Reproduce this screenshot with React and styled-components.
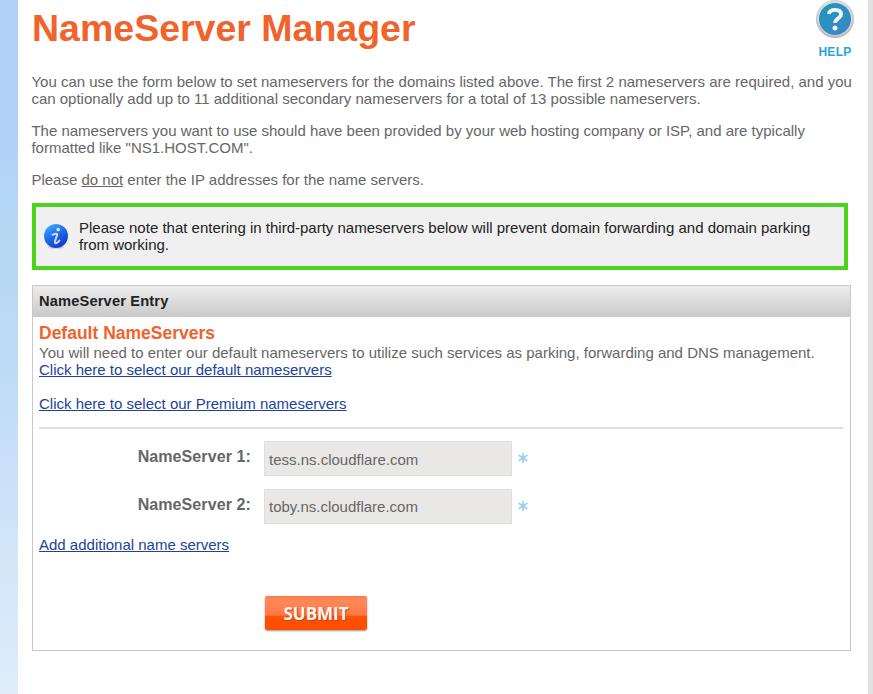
import React from "react";
import styled, { createGlobalStyle } from "styled-components";

const GlobalStyle = createGlobalStyle`
  * { box-sizing: border-box; }
  body { margin: 0; overflow: hidden; background: #fff; }
`;

const Page = styled.div`
  display: flex;
  width: 873px;
  height: 694px;
  overflow: hidden;
  background: linear-gradient(#b1d1f6 0, #b1d1f6 130px, #b2d6f8 190px, #b6d8f3 260px, #bedbf6 370px, #cbe1f9 480px, #d3e7f7 570px, #d8e8fc 610px, #dcebfa 660px, #e0ecf7 694px);
  font: 15px/17px "Liberation Sans", Arial, sans-serif;
  color: #666;
`;

const Content = styled.main`
  width: 850px;
  margin-left: 18px;
  padding-left: 14px;
  background: #fff;
`;

const RightEdge = styled.div`
  width: 5px;
  background: #e0e0e0;
`;

const Header = styled.header`
  display: flex;
  justify-content: space-between;
  height: 73px;
`;

const Title = styled.h1`
  margin: 5px 0 0;
  font-size: 37.5px;
  line-height: 46px;
  color: #f0632b;
  white-space: nowrap;
`;

const Help = styled.a`
  display: flex;
  flex-direction: column;
  align-items: center;
  width: 40px;
  margin-right: 13px;
  color: #2ba3dc;
  font-size: 12px;
  font-weight: bold;
  line-height: 14px;
  letter-spacing: 0.3px;
  svg { display: block; margin-bottom: 5px; }
`;

const Text = styled.p`
  margin: 0 0 ${(p) => p.$gap ?? 15}px ${(p) => p.$indent ?? 0}px;
  white-space: nowrap;
`;

const Notice = styled.aside`
  display: flex;
  width: 816px;
  height: 67px;
  border: 4px solid #4bd41b;
  background: #f0f0f0;
  color: #222;
  padding: 12px 0 0 7px;
  svg { margin: 4px 10px 0 0; flex: none; }
`;

const Panel = styled.section`
  width: 819px;
  height: 366px;
  margin-top: 15px;
  border: 1px solid #c9c9c9;
`;

const PanelTitle = styled.h2`
  margin: 0;
  height: 31px;
  padding-left: 6px;
  background: linear-gradient(#ebebeb 0, #e6e6e6 20%, #c9c9c9 100%);
  color: #222;
  font-size: 14.67px;
  line-height: 31px;
  letter-spacing: 0.15px;
`;

const PanelBody = styled.div`
  padding: 6px 7px 0 6px;
`;

const Subtitle = styled.h3`
  margin: 0;
  color: #f0632b;
  font-size: 17.5px;
  line-height: 21px;
`;

const Link = styled.a`
  color: #1d429b;
  text-decoration: underline;
`;

const Divider = styled.hr`
  height: 2px;
  margin: 0 0 12px;
  border: 0;
  background: #dedede;
`;

const Fields = styled.div`
  display: grid;
  gap: 13px;
  margin-bottom: 12px;
`;

const Field = styled.label`
  display: flex;
  height: 35px;
`;

const FieldName = styled.span`
  width: 212px;
  margin-right: 13px;
  padding-top: 7px;
  text-align: right;
  font-size: 16px;
  font-weight: bold;
  letter-spacing: 0.1px;
`;

const Input = styled.input`
  width: 248px;
  height: 35px;
  padding: ${(p) => p.$top}px 4px 1px;
  border: 1px solid #dedede;
  border-radius: 0;
  background: #e9e8e7;
  color: #666;
  font: 15px/17px "Liberation Sans", Arial, sans-serif;
`;

const Star = styled.svg`
  margin: 12px 0 0 6px;
`;

const Submit = styled.button`
  display: block;
  width: 102px;
  height: 34px;
  margin: 43px 0 0 226px;
  padding: 0;
  border: 0;
  border-radius: 2px;
  background: linear-gradient(#ff7946, #ff8a59 10%, #ff7844 57%, #ff5005 59%, #ff4d00);
  box-shadow: 0 1px 2px #999;
  color: #fff8f3;
  font: bold 17px/36px "Open Sans", sans-serif;
  text-shadow: 1px 1px 1px #b9481d;
`;

const HelpIcon = () => (
  <svg width="40" height="40" viewBox="0 0 40 40">
    <defs>
      <linearGradient id="helpBlue" x1="0" y1="0" x2="0.7" y2="1">
        <stop offset="0" stopColor="#2196b9" />
        <stop offset="0.5" stopColor="#2b92bf" />
        <stop offset="1" stopColor="#3b86c5" />
      </linearGradient>
      <linearGradient id="helpRim" x1="0" y1="0" x2="0" y2="1">
        <stop offset="0" stopColor="#d9dcde" />
        <stop offset="1" stopColor="#bcbcbc" />
      </linearGradient>
    </defs>
    <circle cx="20" cy="19" r="19.2" fill="url(#helpRim)" />
    <circle cx="20" cy="18.6" r="16.9" fill="#d8e2e7" />
    <circle cx="20" cy="18.9" r="16" fill="url(#helpBlue)" />
    <path d="M13.8 14C14.3 11 16.8 9.9 20.1 9.9C23.8 9.9 26 11.6 26 14.4C26 18.4 20.1 18.4 20.1 23" fill="none" stroke="#f1f5f6" strokeWidth="3.8" />
    <circle cx="20" cy="28" r="2.5" fill="#f1f5f6" />
  </svg>
);

const InfoIcon = () => (
  <svg width="26" height="27" viewBox="0 0 26 27">
    <defs>
      <linearGradient id="infoBlue" x1="0.1" y1="0" x2="0.7" y2="1">
        <stop offset="0" stopColor="#42b4fa" />
        <stop offset="0.45" stopColor="#2071ee" />
        <stop offset="1" stopColor="#1730cc" />
      </linearGradient>
    </defs>
    <ellipse cx="13" cy="24.3" rx="8" ry="1.7" fill="#cfcfd4" />
    <circle cx="13" cy="13" r="12" fill="url(#infoBlue)" />
    <circle cx="15.2" cy="6.6" r="1.9" fill="#cfe0fb" />
    <path d="M9.6 11.8Q13.8 9.8 14.2 11.4Q14 13 12.2 17.4Q11.4 20.6 13 20.2Q14.6 19.8 16.4 17.6" fill="none" stroke="#c6dcff" strokeWidth="2" strokeLinecap="round" />
  </svg>
);

const NameServerField = ({ name, value, top }) => (
  <Field>
    <FieldName>{name}</FieldName>
    <Input defaultValue={value} $top={top} />
    <Star width="10" height="10" viewBox="0 0 10 10" stroke="#9bd2f1" strokeWidth="1.8" strokeLinecap="round">
      <path d="M5 1V9M1.2 2.6L8.8 7.4M8.8 2.6L1.2 7.4" />
    </Star>
  </Field>
);

export default function App() {
  return (
    <Page>
      <GlobalStyle />
      <Content>
        <Header>
          <Title>NameServer Manager</Title>
          <Help><HelpIcon />HELP</Help>
        </Header>
        <Text $indent={-0.6}>
          You can use the form below to set nameservers for the domains listed above. The first 2 nameservers are required, and you<br />
          can optionally add up to 11 additional secondary nameservers for a total of 13 possible nameservers.
        </Text>
        <Text $indent={-0.6}>
          The nameservers you want to use should have been provided by your web hosting company or ISP, and are typically<br />
          formatted like "NS1.HOST.COM".
        </Text>
        <Text $indent={-0.6}>Please <u>do not</u> enter the IP addresses for the name servers.</Text>
        <Notice>
          <InfoIcon />
          <Text>
            Please note that entering in third-party nameservers below will prevent domain forwarding and domain parking<br />
            from working.
          </Text>
        </Notice>
        <Panel>
          <PanelTitle>NameServer Entry</PanelTitle>
          <PanelBody>
            <Subtitle>Default NameServers</Subtitle>
            <Text $gap={17}>
              You will need to enter our default nameservers to utilize such services as parking, forwarding and DNS management.<br />
              <Link>Click here to select our default nameservers</Link>
            </Text>
            <Text $gap={15}><Link>Click here to select our Premium nameservers</Link></Text>
            <Divider />
            <Fields>
              <NameServerField name="NameServer 1:" value="tess.ns.cloudflare.com" top={2} />
              <NameServerField name="NameServer 2:" value="toby.ns.cloudflare.com" top={0} />
            </Fields>
            <Text $gap={0}><Link>Add additional name servers</Link></Text>
            <Submit>SUBMIT</Submit>
          </PanelBody>
        </Panel>
      </Content>
      <RightEdge />
    </Page>
  );
}
